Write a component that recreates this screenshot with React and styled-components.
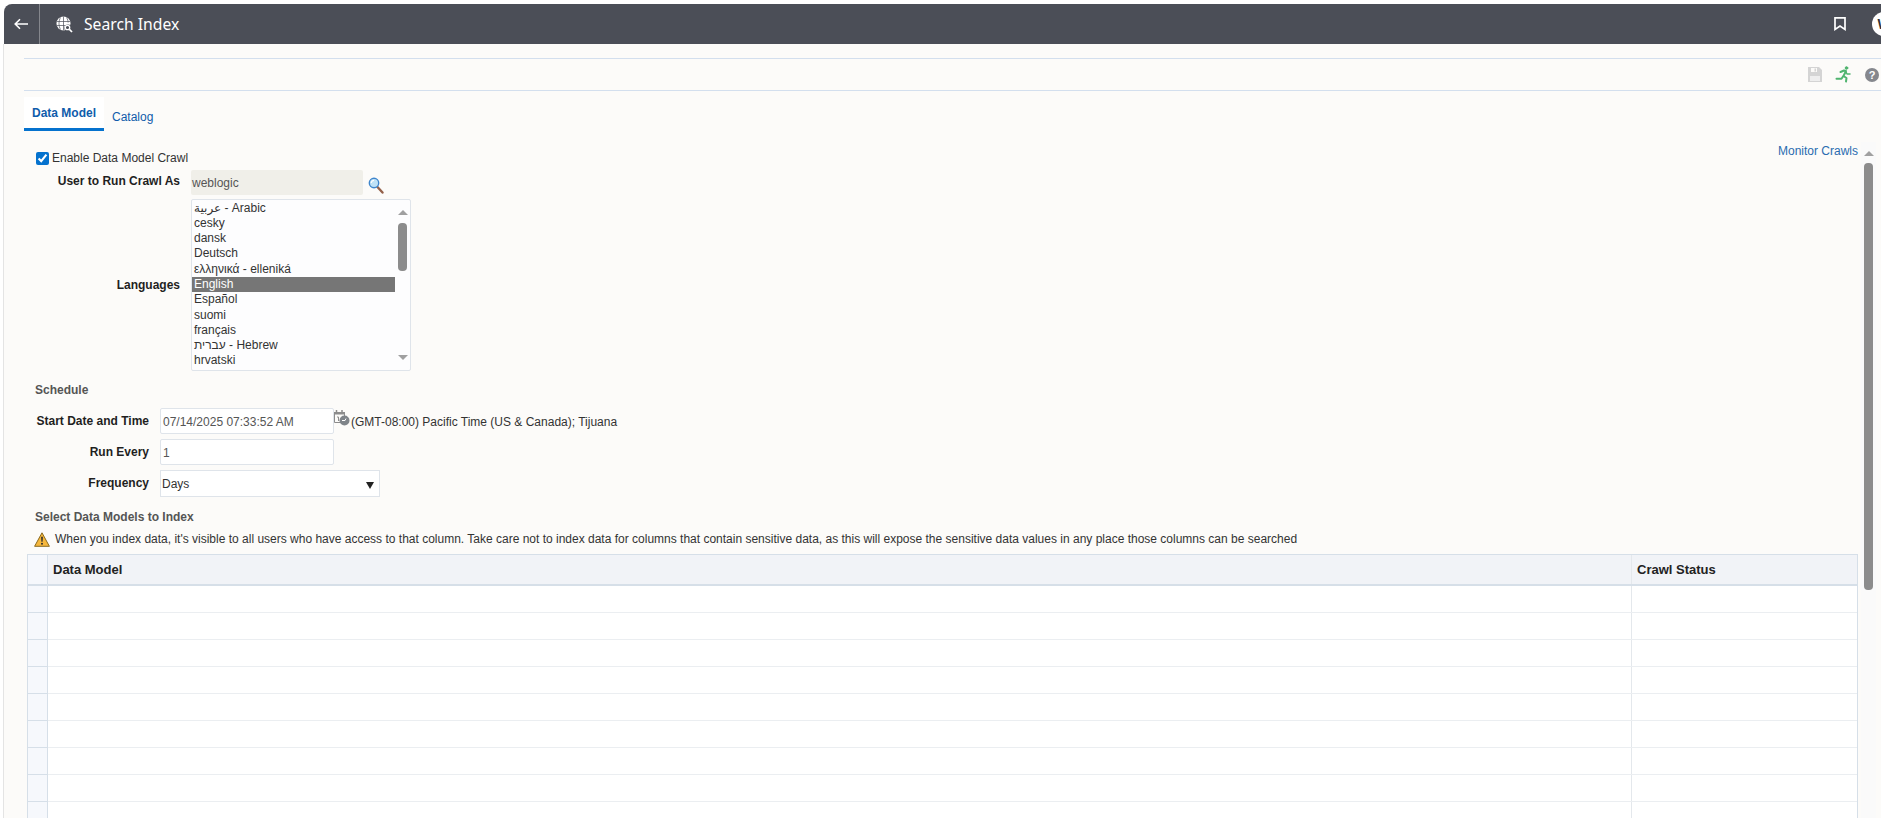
import React from 'react'
import styled, { createGlobalStyle } from 'styled-components'

const GlobalStyle = createGlobalStyle`
  html, body {
    margin: 0;
    padding: 0;
    height: 100%;
    overflow: hidden;
    background: #ffffff;
    font-family: "Liberation Sans", Arial, sans-serif;
    font-size: 12px;
    color: #333;
  }
`

const languages = [
  'عربية - Arabic',
  'cesky',
  'dansk',
  'Deutsch',
  'ελληνικά - elleniká',
  'English',
  'Español',
  'suomi',
  'français',
  'עברית - Hebrew',
  'hrvatski',
]

const BackIcon = () => (
  <svg width="14" height="12" viewBox="0 0 14 12" fill="none" stroke="#fff" strokeWidth="1.6">
    <path d="M14 6H1.5M6 1.2 1.2 6 6 10.8" />
  </svg>
)

const GlobeIcon = () => (
  <svg width="17" height="17" viewBox="0 0 17 17">
    <circle cx="7.5" cy="7.5" r="7" fill="#fff" />
    <path d="M1 5.5h13M1 9.5h9M7.5 .5v14M4.5 1.5c-2 3.500-2 8.500 0 12M10.500 1.500c1.200 2 1.600 3.500 1.600 5" fill="none" stroke="#4b4e57" strokeWidth=".7" />
    <circle cx="12" cy="12" r="3.600" fill="#4b4e57" />
    <circle cx="11.500" cy="11.500" r="2.200" fill="none" stroke="#fff" strokeWidth="1.300" />
    <path d="M13.200 13.200 16 16" stroke="#fff" strokeWidth="1.700" />
  </svg>
)

const BookmarkIcon = () => (
  <svg width="12" height="14" viewBox="0 0 12 14" fill="none" stroke="#fff" strokeWidth="1.700">
    <path d="M1 .9h10v11.500L6 9l-5 3.400z" />
  </svg>
)

const SaveIcon = () => (
  <svg width="14" height="15" viewBox="0 0 14 15">
    <path d="M0 0h11l3 3v12H0z" fill="#d4d4d4" />
    <path d="M3 1h6v4H3z" fill="#fcfbf9" />
    <path d="M6.500 1.500h1.500v3H6.500z" fill="#d4d4d4" />
    <path d="M2 9h10v5H2z" fill="#eeeeee" />
  </svg>
)

const RunIcon = () => (
  <svg width="17" height="17" viewBox="0 0 17 17" fill="none" stroke="#4fb46f" strokeWidth="2" strokeLinecap="round" strokeLinejoin="round">
    <circle cx="11.500" cy="2" r="1.300" fill="#4fb46f" strokeWidth="1" />
    <path d="M5.500 6 9 4.500l2 .5-2.500 5 3 2-.5 3.500" />
    <path d="M8 10.500 6.500 12.800H1.500" />
    <path d="M11 6l1 2h3" strokeWidth="1.500" />
  </svg>
)

const SearchIcon = () => (
  <svg width="16" height="17" viewBox="0 0 16 17">
    <path d="M9.500 10 14.500 15.500" stroke="#94604a" strokeWidth="2.400" strokeLinecap="round" />
    <circle cx="6" cy="6" r="4.700" fill="#bfe2f7" stroke="#3f86cc" strokeWidth="1.400" />
    <path d="M3.300 6a2.700 2.700 0 0 1 2.700-2.700" fill="none" stroke="#fff" strokeWidth="1.200" />
  </svg>
)

const CalendarIcon = () => (
  <svg width="16" height="16" viewBox="0 0 16 16">
    <path d="M.5 2.500h10v10H.5z" fill="#fcfbf9" stroke="#8c8c8c" />
    <path d="M0 2h11v2.500H0z" fill="#8c8c8c" />
    <path d="M2.500 0v3M8 0v3" stroke="#8c8c8c" strokeWidth="1.500" />
    <path d="M3 7h1.500v4" fill="none" stroke="#8c8c8c" />
    <circle cx="10.500" cy="10.500" r="5" fill="#7f8489" />
    <path d="M8 10.500h3l1-2" fill="none" stroke="#fff" />
  </svg>
)

const WarningIcon = () => (
  <svg width="16" height="15" viewBox="0 0 16 15">
    <path d="M8 .8 15.400 14.300H.6z" fill="#f6b73c" stroke="#8a6a1f" strokeLinejoin="round" />
    <path d="M7.100 4.800h1.800l-.3 5H7.400z" fill="#2c2c2c" />
    <circle cx="8" cy="11.700" r="1" fill="#2c2c2c" />
  </svg>
)

export default function App() {
  return (
    <>
      <GlobalStyle />
      <Page>
        <Header>
          <BackButton><BackIcon /></BackButton>
          <TitleIcon><GlobeIcon /></TitleIcon>
          <Title>Search Index</Title>
          <HeaderRight>
            <BookmarkIcon />
            <Avatar>W</Avatar>
          </HeaderRight>
        </Header>
        <Body>
          <Toolbar>
            <ToolIcon><SaveIcon /></ToolIcon>
            <ToolIcon><RunIcon /></ToolIcon>
            <HelpIcon>?</HelpIcon>
          </Toolbar>
          <Tabs>
            <Tab $active>Data Model</Tab>
            <Tab>Catalog</Tab>
          </Tabs>
          <Content>
            <Form>
              <MonitorLink>Monitor Crawls</MonitorLink>
              <CheckRow>
                <Check type="checkbox" defaultChecked />
                <span>Enable Data Model Crawl</span>
              </CheckRow>
              <UserRow>
                <FieldLabel $width={153} $lift={3}>User to Run Crawl As</FieldLabel>
                <UserInput>weblogic</UserInput>
                <SearchSlot><SearchIcon /></SearchSlot>
              </UserRow>
              <LanguageRow>
                <FieldLabel $width={153}>Languages</FieldLabel>
                <ListBox>
                  <ListItems>
                    {languages.map((lang) => (
                      <ListItem key={lang} $selected={lang === 'English'}>{lang}</ListItem>
                    ))}
                  </ListItems>
                  <ListScroll>
                    <ArrowUp />
                    <ListThumb />
                    <ArrowDown />
                  </ListScroll>
                </ListBox>
              </LanguageRow>
              <Heading $top={12}>Schedule</Heading>
              <ScheduleRow $top={11}>
                <FieldLabel $width={122} $lift={1}>Start Date and Time</FieldLabel>
                <TextBox>07/14/2025 07:33:52 AM</TextBox>
                <CalendarSlot><CalendarIcon /></CalendarSlot>
                <TimeZone>(GMT-08:00) Pacific Time (US &amp; Canada); Tijuana</TimeZone>
              </ScheduleRow>
              <ScheduleRow $top={5}>
                <FieldLabel $width={122} $lift={1}>Run Every</FieldLabel>
                <TextBox>1</TextBox>
              </ScheduleRow>
              <ScheduleRow $top={5}>
                <FieldLabel $width={122} $lift={1}>Frequency</FieldLabel>
                <SelectBox>
                  Days
                  <SelectCaret />
                </SelectBox>
              </ScheduleRow>
              <Heading $top={13}>Select Data Models to Index</Heading>
              <Notice>
                <WarningIcon />
                <span>When you index data, it's visible to all users who have access to that column. Take care not to index data for columns that contain sensitive data, as this will expose the sensitive data values in any place those columns can be searched</span>
              </Notice>
              <Table>
                <HeadRow>
                  <RowHead $header />
                  <NameCell>Data Model</NameCell>
                  <StatusCell>Crawl Status</StatusCell>
                </HeadRow>
                {Array.from({ length: 9 }).map((_, i) => (
                  <BodyRow key={i}>
                    <RowHead />
                    <NameCell />
                    <StatusCell />
                  </BodyRow>
                ))}
              </Table>
            </Form>
            <PageScroll>
              <PageArrow />
              <PageThumb />
            </PageScroll>
          </Content>
        </Body>
      </Page>
    </>
  )
}

const Page = styled.div`
  height: 100vh;
  padding: 4px 0 0 3px;
  box-sizing: border-box;
  display: flex;
  flex-direction: column;
  overflow: hidden;
`

const Header = styled.div`
  flex: none;
  height: 40px;
  margin-left: 1px;
  background: #4b4e57;
  border-top-left-radius: 8px;
  display: flex;
  align-items: center;
  color: #fff;
`

const BackButton = styled.div`
  width: 36px;
  height: 40px;
  box-sizing: border-box;
  border-right: 1px solid #85878d;
  display: flex;
  align-items: center;
  padding-left: 10px;
`

const TitleIcon = styled.div`
  margin-left: 16px;
  display: flex;
`

const Title = styled.div`
  margin-left: 11px;
  font-family: "Noto Sans", sans-serif;
  font-size: 15.7px;
  color: #fff;
`

const HeaderRight = styled.div`
  margin-left: auto;
  display: flex;
  align-items: center;
  margin-right: -15px;
  gap: 26px;
`

const Avatar = styled.div`
  width: 24px;
  height: 24px;
  border-radius: 50%;
  background: #fff;
  color: #333;
  font-size: 14px;
  font-weight: bold;
  display: flex;
  align-items: center;
  justify-content: center;
`

const Body = styled.div`
  flex: 1;
  min-height: 0;
  border-left: 1px solid #e4e4e4;
  background: #fcfbf9;
  padding-left: 20px;
  display: flex;
  flex-direction: column;
`

const Toolbar = styled.div`
  flex: none;
  margin-top: 14px;
  height: 31px;
  border-top: 1px solid #d3dfee;
  border-bottom: 1px solid #d3dfee;
  display: flex;
  align-items: center;
  justify-content: flex-end;
  padding-right: 2px;
`

const ToolIcon = styled.div`
  display: flex;
  margin-right: 13px;
`

const HelpIcon = styled.div`
  width: 14px;
  height: 14px;
  border-radius: 50%;
  background: #85878d;
  color: #fff;
  font-size: 11px;
  font-weight: bold;
  text-align: center;
  line-height: 14px;
`

const Tabs = styled.div`
  flex: none;
  margin-top: 6px;
  height: 34px;
  display: flex;
  align-items: flex-start;
`

const Tab = styled.div`
  box-sizing: border-box;
  height: 34px;
  font-size: 12px;
  font-weight: ${(p) => (p.$active ? 'bold' : 'normal')};
  color: #0f5cab;
  padding: ${(p) => (p.$active ? '9px 8px 0' : '13px 8px 0')};
  background: ${(p) => (p.$active ? '#ffffff' : 'transparent')};
  border-bottom: ${(p) => (p.$active ? '3px solid #0572ce' : 'none')};
`

const Content = styled.div`
  flex: 1;
  min-height: 0;
  display: flex;
`

const Form = styled.div`
  position: relative;
  width: 1834px;
  flex: none;
  padding: 20px 0 0 3px;
  box-sizing: border-box;
`

const MonitorLink = styled.a`
  position: absolute;
  top: 13px;
  right: 0;
  color: #2a6cb0;
  font-size: 12px;
`

const CheckRow = styled.label`
  display: flex;
  align-items: center;
  height: 14px;
  margin-left: 9px;
  gap: 3px;
  font-size: 12px;
  color: #333;
`

const Check = styled.input`
  margin: 0;
  width: 13px;
  height: 13px;
  accent-color: #0572ce;
`

const UserRow = styled.div`
  display: flex;
  align-items: center;
  margin-top: 5px;
`

const FieldLabel = styled.div`
  flex: none;
  width: ${(p) => p.$width}px;
  text-align: right;
  font-weight: bold;
  font-size: 12px;
  color: #1f1f1f;
  margin-right: 11px;
  padding-bottom: ${(p) => p.$lift || 0}px;
`

const UserInput = styled.div`
  width: 172px;
  height: 25px;
  box-sizing: border-box;
  background: #f0efe9;
  border-radius: 2px;
  color: #555;
  font-size: 12px;
  line-height: 27px;
  padding-left: 1px;
`

const SearchSlot = styled.div`
  display: flex;
  margin: 6px 0 0 5px;
`

const LanguageRow = styled.div`
  display: flex;
  align-items: center;
  margin-top: 4px;
`

const ListBox = styled.div`
  width: 220px;
  height: 172px;
  box-sizing: border-box;
  border: 1px solid #dfe4ea;
  border-radius: 2px;
  background: #fdfdfe;
  display: flex;
  overflow: hidden;
`

const ListItems = styled.div`
  width: 203px;
  flex: none;
  padding-top: 0.5px;
`

const ListItem = styled.div`
  height: 15.3px;
  line-height: 15px;
  font-size: 12px;
  padding-left: 2px;
  white-space: nowrap;
  font-family: "Liberation Sans", "DejaVu Sans", sans-serif;
  color: ${(p) => (p.$selected ? '#fff' : '#333')};
  background: ${(p) => (p.$selected ? '#767676' : 'transparent')};
`

const ListScroll = styled.div`
  flex: 1;
  display: flex;
  flex-direction: column;
  align-items: center;
  padding-top: 10px;
`

const ArrowUp = styled.div`
  width: 0;
  height: 0;
  border-left: 5px solid transparent;
  border-right: 5px solid transparent;
  border-bottom: 5px solid #a0a0a0;
`

const ArrowDown = styled.div`
  width: 0;
  height: 0;
  margin-top: auto;
  margin-bottom: 10px;
  border-left: 5px solid transparent;
  border-right: 5px solid transparent;
  border-top: 5px solid #a0a0a0;
`

const ListThumb = styled.div`
  width: 9px;
  height: 48px;
  margin-top: 8px;
  border-radius: 4px;
  background: #8c8c8c;
`

const Heading = styled.div`
  margin: ${(p) => p.$top}px 0 0 8px;
  font-weight: bold;
  font-size: 12px;
  line-height: 14px;
  color: #555;
`

const ScheduleRow = styled.div`
  display: flex;
  align-items: center;
  margin-top: ${(p) => p.$top}px;
`

const TextBox = styled.div`
  width: 174px;
  height: 26px;
  box-sizing: border-box;
  border: 1px solid #dfe4ea;
  border-radius: 2px;
  background: #fff;
  color: #555;
  font-size: 12px;
  line-height: 26px;
  padding-left: 2px;
`

const CalendarSlot = styled.div`
  display: flex;
  align-self: flex-start;
  margin-top: 2px;
  width: 17px;
  flex: none;
`

const TimeZone = styled.div`
  font-size: 12px;
  color: #333;
  padding-top: 2px;
`

const SelectBox = styled.div`
  position: relative;
  width: 220px;
  height: 27px;
  box-sizing: border-box;
  border: 1px solid #dfe4ea;
  background: #fff;
  color: #333;
  font-size: 12px;
  line-height: 26px;
  padding-left: 1px;
`

const SelectCaret = styled.div`
  position: absolute;
  right: 5px;
  top: 11px;
  width: 0;
  height: 0;
  border-left: 4.5px solid transparent;
  border-right: 4.5px solid transparent;
  border-top: 7px solid #222;
`

const Notice = styled.div`
  display: flex;
  align-items: center;
  gap: 5px;
  margin: 7px 0 0 7px;
  height: 16px;
  font-size: 12px;
  color: #333;
  white-space: nowrap;
`

const Table = styled.div`
  margin-top: 7px;
  width: 1831px;
  border: 1px solid #d6dfe8;
  border-bottom: none;
  box-sizing: border-box;
  background: #fff;
`

const HeadRow = styled.div`
  display: flex;
  height: 31px;
  box-sizing: border-box;
  background: #f1f3f7;
  border-bottom: 2px solid #d6dfe8;
  font-weight: bold;
  font-size: 13px;
  line-height: 29px;
  color: #222;
`

const BodyRow = styled.div`
  display: flex;
  height: 26px;
  border-bottom: 1px solid #ebeef1;
`

const RowHead = styled.div`
  flex: none;
  width: 20px;
  box-sizing: border-box;
  background: #f6f8fc;
  border-right: 1px solid #d6dfe8;
  border-bottom: ${(p) => (p.$header ? 'none' : '1px solid #d6dfe8')};
  margin-bottom: ${(p) => (p.$header ? '0' : '-1px')};
`

const NameCell = styled.div`
  flex: 1;
  padding-left: 5px;
`

const StatusCell = styled.div`
  flex: none;
  width: 226px;
  box-sizing: border-box;
  border-left: 1px solid #e4e8ec;
  padding-left: 5px;
`

const PageScroll = styled.div`
  flex: none;
  width: 15px;
  margin: 11px 0 0 3px;
  background: #fafafa;
  display: flex;
  flex-direction: column;
  align-items: center;
  padding-top: 9px;
`

const PageArrow = styled.div`
  width: 0;
  height: 0;
  border-left: 5px solid transparent;
  border-right: 5px solid transparent;
  border-bottom: 5px solid #a0a0a0;
`

const PageThumb = styled.div`
  width: 9px;
  height: 427px;
  margin-top: 7px;
  border-radius: 4px;
  background: #8c8c8c;
`
